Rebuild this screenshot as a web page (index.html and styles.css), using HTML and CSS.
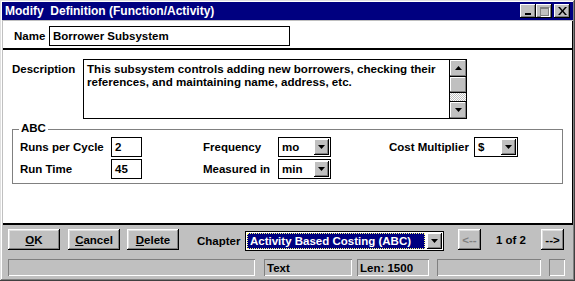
FILE: index.html
```html
<!DOCTYPE html>
<html>
<head>
<title>Modify Definition</title>
<link rel="stylesheet" href="styles.css">
</head>
<body>

<div class="window">
  <!-- caption bar -->
  <div class="titlebar">
    <span class="title">Modify&nbsp; Definition (Function/Activity)</span>
    <div class="caption-btns">
      <span class="cbtn"><span class="min-bar"></span></span>
      <span class="cbtn"><span class="max-box"></span></span>
      <span class="cbtn close">
        <svg width="9" height="8" viewBox="0 0 9 8"><path d="M0 0h2l2.5 3 2.5-3h2l-3.5 4 3.5 4h-2l-2.5-3-2.5 3h-2l3.5-4z" fill="#000"/></svg>
      </span>
    </div>
  </div>

  <div class="client">
    <div class="name-row">
      <span class="lbl name-lbl">Name</span>
      <div class="field name-field">Borrower Subsystem</div>
    </div>

    <div class="detail">
      <div class="desc-row">
        <span class="lbl desc-lbl">Description</span>
        <div class="memo">
          <div class="memo-text">This subsystem controls adding new borrowers, checking their references, and maintaining name, address, etc.</div>
          <div class="vscroll">
            <span class="sbtn"><svg width="7" height="4" viewBox="0 0 7 4"><path d="M3.5 0L7 4H0z" fill="#000"/></svg></span>
            <span class="sthumb"></span>
            <span class="strack"></span>
            <span class="sbtn"><svg width="7" height="4" viewBox="0 0 7 4"><path d="M0 0h7L3.5 4z" fill="#000"/></svg></span>
          </div>
        </div>
      </div>

      <div class="group">
        <span class="legend">ABC</span>
        <div class="abc-grid">
          <span class="lbl">Runs per Cycle</span>
          <div class="field small">2</div>
          <span class="lbl c4">Frequency</span>
          <div class="combo c5"><span class="combo-val">mo</span><span class="drop"><svg width="7" height="4" viewBox="0 0 7 4"><path d="M0 0h7L3.5 4z" fill="#000"/></svg></span></div>
          <span class="lbl c7">Cost Multiplier</span>
          <div class="combo c8"><span class="combo-val">$</span><span class="drop"><svg width="7" height="4" viewBox="0 0 7 4"><path d="M0 0h7L3.5 4z" fill="#000"/></svg></span></div>

          <span class="lbl">Run Time</span>
          <div class="field small">45</div>
          <span class="lbl c4">Measured in</span>
          <div class="combo c5"><span class="combo-val">min</span><span class="drop"><svg width="7" height="4" viewBox="0 0 7 4"><path d="M0 0h7L3.5 4z" fill="#000"/></svg></span></div>
        </div>
      </div>
    </div>
  </div>

  <div class="toolbar">
    <button class="btn"><u>O</u>K</button>
    <button class="btn"><u>C</u>ancel</button>
    <button class="btn"><u>D</u>elete</button>
    <span class="lbl chapter-lbl">Chapter</span>
    <div class="combo chapter">
      <span class="combo-val sel"><span class="focus">Activity Based Costing (ABC)</span></span>
      <span class="drop"><svg width="7" height="4" viewBox="0 0 7 4"><path d="M0 0h7L3.5 4z" fill="#000"/></svg></span>
    </div>
    <button class="btn nav disabled">&lt;--</button>
    <span class="counter">1 of 2</span>
    <button class="btn nav">--&gt;</button>
  </div>

  <div class="statusbar">
    <span class="panel p1"></span>
    <span class="panel p2">Text</span>
    <span class="panel p3">Len: 1500</span>
    <span class="panel p4"></span>
    <span class="panel p5"></span>
  </div>
</div>

</body>
</html>
```

FILE: styles.css
```css
body {
  margin: 0;
  font-family: "Liberation Sans", Arial, sans-serif;
  font-size: 11.5px;
  font-weight: bold;
  color: #000;
}

/* outer window frame */
.window {
  box-sizing: border-box;
  width: 575px;
  height: 281px;
  padding: 2px;
  background: #c0c0c0;
  box-shadow: inset -1px -1px #404040, inset 1px 1px #dfdfdf, inset -2px -2px #808080, inset 2px 2px #fff;
}

/* caption */
.titlebar {
  height: 18px;
  background: #000080;
  display: flex;
  align-items: center;
  justify-content: space-between;
  padding: 0 3px 0 3px;
}

.title {
  color: #fff;
  font-size: 12px;
}

.caption-btns {
  display: flex;
  align-items: center;
}

.cbtn {
  box-sizing: border-box;
  width: 16px;
  height: 14px;
  background: #c0c0c0;
  box-shadow: inset -1px -1px #000, inset 1px 1px #fff, inset -2px -2px #808080;
  display: flex;
  align-items: center;
  justify-content: center;
}

.cbtn.close {
  margin-left: 2px;
}

.min-bar {
  width: 6px;
  height: 2px;
  background: #000;
  margin-top: 6px;
}

.max-box {
  box-sizing: border-box;
  width: 9px;
  height: 9px;
  border: 1px solid #808080;
  border-top-width: 2px;
  box-shadow: 1px 1px #fff;
}

/* white client area */
.client {
  margin: 1px 0 0 1px;
  height: 202px;
  background: #fff;
  border-right: 1px solid #000;
  border-bottom: 2px solid #000;
}

.name-row {
  box-sizing: border-box;
  height: 29px;
  display: flex;
  align-items: center;
  padding: 3px 0 0 11px;
  border-bottom: 2px solid #000;
}

.name-lbl {
  width: 35px;
}

.field {
  box-sizing: border-box;
  height: 20px;
  border: 1px solid #000;
  padding: 0 3px;
  display: flex;
  align-items: center;
  background: #fff;
}

.name-field {
  width: 241px;
}

.detail {
  padding: 9px 0 0 9px;
}

.desc-row {
  display: flex;
}

.desc-lbl {
  width: 71px;
  padding-top: 4px;
}

.memo {
  display: flex;
  height: 60px;
}

.memo-text {
  box-sizing: border-box;
  width: 367px;
  height: 60px;
  border: 1px solid #000;
  padding: 2px 3px;
  line-height: 13px;
  font-size: 11.6px;
}

.vscroll {
  box-sizing: border-box;
  width: 17px;
  border: 1px solid #000;
  border-left: none;
  display: flex;
  flex-direction: column;
}

.sbtn, .sthumb {
  height: 16px;
  background: #c0c0c0;
  box-shadow: inset -1px -1px #808080, inset 1px 1px #fff;
  display: flex;
  align-items: center;
  justify-content: center;
  border-bottom: 1px solid #000;
}

.sbtn:last-child {
  border-bottom: none;
  border-top: 1px solid #000;
}

.sthumb {
  height: 15px;
}

.strack {
  flex: 1;
  background: repeating-conic-gradient(#c0c0c0 0 25%, #fff 0 50%) 0 0/2px 2px;
}

/* ABC group box */
.group {
  position: relative;
  box-sizing: border-box;
  width: 551px;
  height: 55px;
  margin-top: 10px;
  border: 1px solid #808080;
  padding: 7px 0 0 7px;
}

.legend {
  position: absolute;
  top: -8px;
  left: 6px;
  padding: 0 2px;
  background: #fff;
}

.abc-grid {
  display: grid;
  grid-template-columns: 91px 31px 61px 75px 53px 58px 85px 44px;
  grid-template-rows: 20px 20px;
  row-gap: 2px;
  align-items: center;
}

.c4 { grid-column: 4; }
.c5 { grid-column: 5; }
.c7 { grid-column: 7; }
.c8 { grid-column: 8; }

.combo {
  box-sizing: border-box;
  height: 20px;
  border: 1px solid #000;
  background: #fff;
  display: flex;
  align-items: stretch;
}

.combo-val {
  flex: 1;
  display: flex;
  align-items: center;
  padding-left: 3px;
}

.drop {
  width: 15px;
  margin: 1px;
  background: #c0c0c0;
  box-shadow: inset -1px -1px #000, inset 1px 1px #fff, inset -2px -2px #808080;
  display: flex;
  align-items: center;
  justify-content: center;
}

/* bottom button bar */
.toolbar {
  height: 32px;
  display: flex;
  align-items: flex-start;
  padding-left: 6px;
}

.btn {
  box-sizing: border-box;
  width: 52px;
  height: 21px;
  margin-top: 4px;
  margin-right: 8px;
  border: none;
  padding: 0;
  background: #c0c0c0;
  font: inherit;
  color: #000;
  box-shadow: inset -1px -1px #000, inset 1px 1px #fff, inset -2px -2px #808080, inset 2px 2px #dfdfdf;
}

.btn:nth-child(2) {
  margin-right: 7px;
}

.chapter-lbl {
  width: 48px;
  margin-left: 10px;
  margin-top: 10px;
}

.combo.chapter {
  width: 199px;
  margin-top: 6px;
}

.combo-val.sel {
  padding: 1px;
}

.focus {
  flex: 1;
  height: 100%;
  box-sizing: border-box;
  background: #000080;
  color: #fff;
  outline: 1px dotted #ffff80;
  outline-offset: -1px;
  display: flex;
  align-items: center;
  padding-left: 3px;
}

.btn.nav {
  width: 23px;
  margin-right: 0;
}

.btn.nav.disabled {
  margin-left: 14px;
  color: #808080;
}

.counter {
  width: 60px;
  text-align: center;
  margin-top: 9px;
}

/* status bar */
.statusbar {
  display: flex;
  padding: 2px 0 0 6px;
}

.panel {
  box-sizing: border-box;
  height: 17px;
  padding-left: 3px;
  box-shadow: inset 1px 1px #808080, inset -1px -1px #fff;
  display: flex;
  align-items: center;
}

.p1 { width: 247px; margin-right: 9px; }
.p2 { width: 88px; margin-right: 5px; }
.p3 { width: 72px; margin-right: 8px; }
.p4 { width: 104px; margin-right: 8px; }
.p5 { width: 16px; }
```
